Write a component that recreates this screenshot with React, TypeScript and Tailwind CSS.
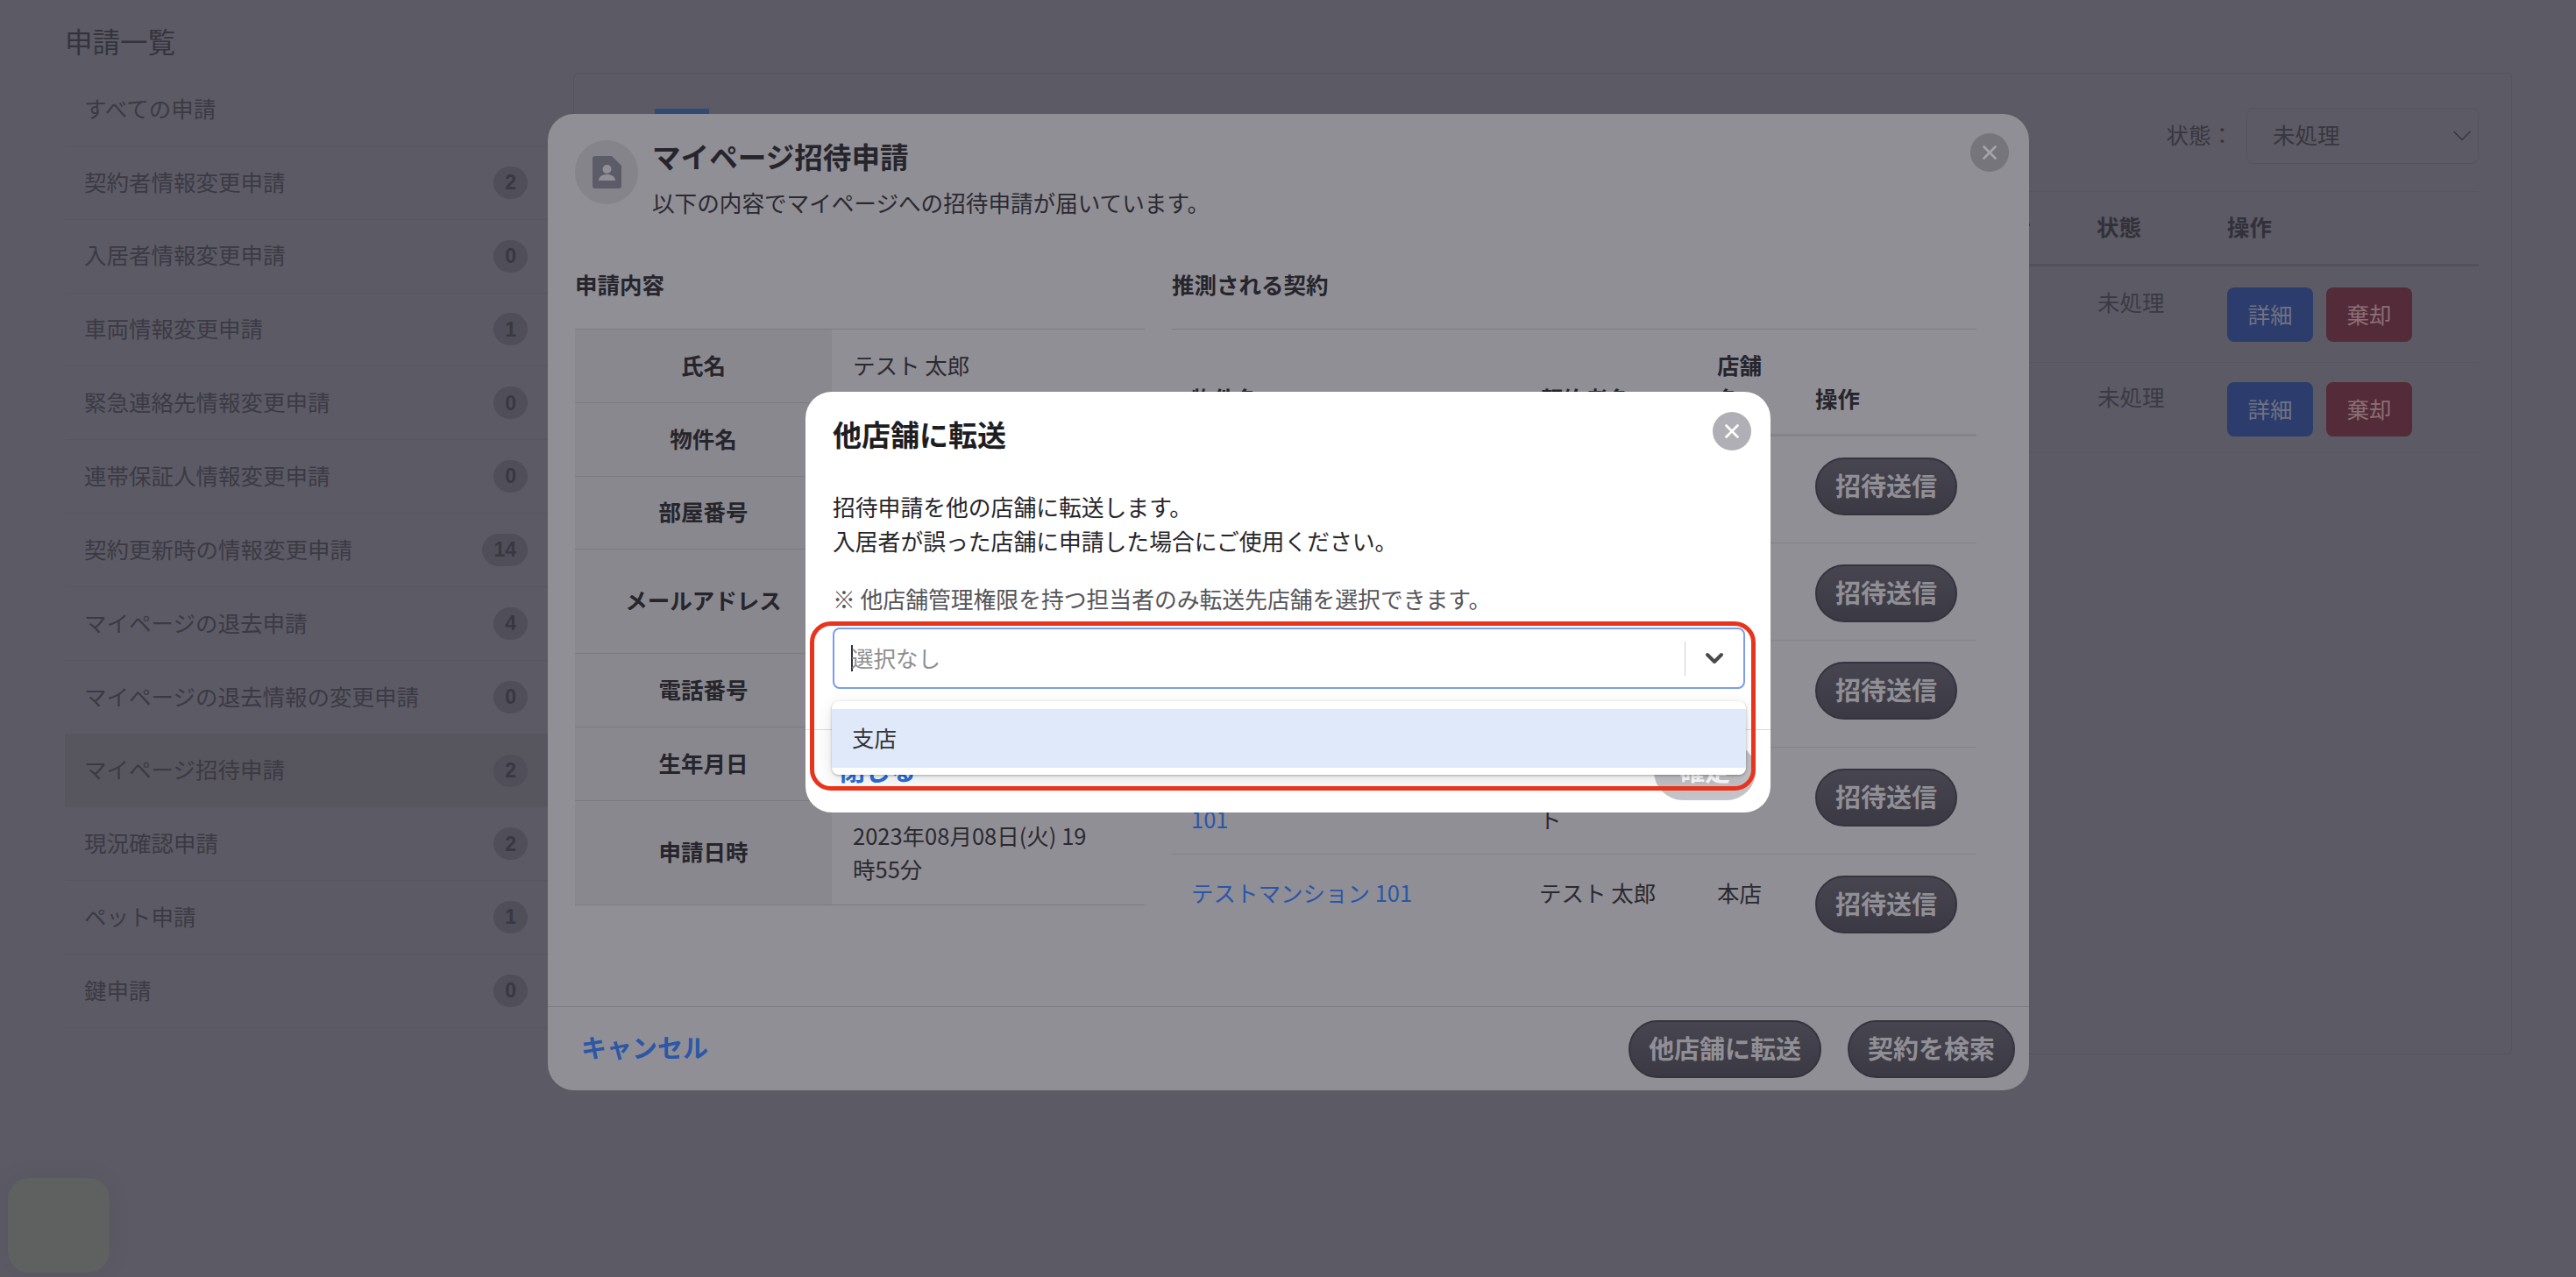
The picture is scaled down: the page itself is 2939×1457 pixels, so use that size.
import type { ReactNode } from 'react';
import { ChevronDown, X } from 'lucide-react';

const sideItems = [
	{ label: 'すべての申請' },
	{ label: '契約者情報変更申請', count: 2 },
	{ label: '入居者情報変更申請', count: 0 },
	{ label: '車両情報変更申請', count: 1 },
	{ label: '緊急連絡先情報変更申請', count: 0 },
	{ label: '連帯保証人情報変更申請', count: 0 },
	{ label: '契約更新時の情報変更申請', count: 14 },
	{ label: 'マイページの退去申請', count: 4 },
	{ label: 'マイページの退去情報の変更申請', count: 0 },
	{ label: 'マイページ招待申請', count: 2, active: true },
	{ label: '現況確認申請', count: 2 },
	{ label: 'ペット申請', count: 1 },
	{ label: '鍵申請', count: 0 },
];

const requestRows: { label: string; value: ReactNode; h: string }[] = [
	{ label: '氏名', value: 'テスト 太郎', h: 'h-[84px]' },
	{ label: '物件名', value: 'テストマンション', h: 'h-[84px]' },
	{ label: '部屋番号', value: '101', h: 'h-[83px]' },
	{ label: 'メールアドレス', value: '', h: 'h-[119px]' },
	{ label: '電話番号', value: '', h: 'h-[84px]' },
	{ label: '生年月日', value: '', h: 'h-[84px]' },
	{
		label: '申請日時',
		value: (
			<>
				2023年08月08日(火) 19
				<br />
				時55分
			</>
		),
		h: 'h-[119px]',
	},
];

const contractRows: { h: string; name: ReactNode; tenant: ReactNode; shop: string }[] = [
	{ h: 'h-[122px]', name: 'テストマンション 101', tenant: 'テスト 太郎', shop: '本店' },
	{ h: 'h-[111px]', name: 'テストマンション 101', tenant: 'テスト 太郎', shop: '本店' },
	{ h: 'h-[122px]', name: 'テストマンション 101', tenant: 'テスト 太郎', shop: '本店' },
	{
		h: 'h-[122px]',
		name: (
			<>
				テストマンション
				<br />
				101
			</>
		),
		tenant: (
			<>
				テスト テス
				<br />ト
			</>
		),
		shop: '本店',
	},
	{ h: 'h-[114px]', name: 'テストマンション 101', tenant: 'テスト 太郎', shop: '本店' },
];

function DarkButton({ children }: { children: string }) {
	return (
		<button className="h-[66px] shrink-0 rounded-full border-2 border-[#35333e] bg-gradient-to-b from-[#47454f] to-[#3b3944] px-[21px] pb-[3px] text-[29px] leading-none font-bold text-[#918f96]">
			{children}
		</button>
	);
}

function Background() {
	return (
		<div className="flex h-full pr-[73px] pl-[74px]">
			{/* sidebar */}
			<div className="w-[551px] shrink-0">
				<div className="h-[83px] pt-[22px] text-[31.5px] leading-[48px] text-[#35343d]">申請一覧</div>
				{sideItems.map((item) => (
					<div
						key={item.label}
						className={`flex h-[83.85px] items-center justify-between border-b border-[#585660] pr-[23px] pl-[22px] text-[25.5px] text-[#3b3a44] ${item.active ? 'bg-[#57555e]' : ''}`}
					>
						<span className="pb-[3px]">{item.label}</span>
						{item.count !== undefined && (
							<span className="flex h-[37px] min-w-[37px] items-center justify-center rounded-full bg-[#504e58] px-[13px] font-['Liberation_Sans',sans-serif] text-[23px] font-bold text-[#393842]">
								{item.count}
							</span>
						)}
					</div>
				))}
			</div>

			{/* main card */}
			<div className="mt-[83px] ml-[29px] flex h-[1120px] flex-1 flex-col rounded-[6px] border border-[#55535d] px-[37px]">
				<div className="flex h-[135px] shrink-0 items-start border-b border-[#585660]">
					<div className="mt-[40px] ml-[55px] h-[10px] w-[62px] bg-[#2f4a75]" />
					<div className="mt-[39px] ml-auto flex items-center gap-[15px]">
						<span className="pb-[3px] text-[25.5px] text-[#38363f]">状態：</span>
						<div className="flex h-[64px] w-[265px] items-center justify-between rounded-[8px] border border-[#54525c] pl-[29px] text-[25.5px] text-[#38363f]">
							<span className="pb-[3px]">未処理</span>
							<ChevronDown className="h-[36px] w-[36px] text-[#38363f]" strokeWidth={1} />
						</div>
					</div>
				</div>
				<div className="flex h-[85px] shrink-0 items-center border-b-[3px] border-[#53515b] pb-[3px] text-[25.5px] font-bold text-[#32313a]">
					<span className="flex-1 pr-[75px] text-right">申請者</span>
					<span className="w-[149px]">状態</span>
					<span className="w-[287px]">操作</span>
				</div>
				{[0, 1].map((i) => (
					<div
						key={i}
						className={`flex shrink-0 border-b border-[#585660] text-[25.5px] text-[#3b3a44] ${i === 0 ? 'h-[110px] pt-[24px]' : 'h-[103px] pt-[22px]'}`}
					>
						<span className="flex-1" />
						<span className="-mt-[3px] w-[149px] leading-[38px]">未処理</span>
						<div className="-ml-[1px] flex w-[287px] gap-[15px]">
							<span className="flex h-[62px] w-[98px] items-center justify-center rounded-[8px] bg-[#2c3c6c] pb-[2px] text-[#6f7383]">詳細</span>
							<span className="flex h-[62px] w-[98px] items-center justify-center rounded-[8px] bg-[#542b38] pb-[2px] text-[#8b6f76]">棄却</span>
						</div>
					</div>
				))}
			</div>

			{/* floating widget, bottom left */}
			<div className="absolute top-[1344px] left-[9px] h-[108px] w-[116px] rounded-[24px] bg-[#5f6060] shadow-[0_0_30px_rgba(0,0,0,0.06)]" />
		</div>
	);
}

function InviteModal() {
	return (
		<div className="absolute top-[130px] left-[625px] flex h-[1114px] w-[1690px] flex-col rounded-[30px] bg-[#918f96] text-[25.5px] text-[#2a2930]">
			<button className="absolute top-[22px] right-[23px] flex h-[44px] w-[44px] items-center justify-center rounded-full bg-[#76757c] text-[#a5a4aa]">
				<X className="h-[26px] w-[26px]" strokeWidth={2.5} />
			</button>

			<div className="flex h-[147px] shrink-0 gap-[16px] pt-[30px] pl-[31px]">
				<div className="flex h-[73px] w-[72px] items-center justify-center rounded-full bg-[#85848b]">
					<svg width="33" height="37" viewBox="0 0 33 37">
						<path d="M3 0h19l11 11v23a3 3 0 0 1-3 3H3a3 3 0 0 1-3-3V3a3 3 0 0 1 3-3z" fill="#5c5b68" />
						<circle cx="16.5" cy="15" r="5" fill="#918f96" />
						<path d="M7 28c0-4.500 4.500-7 9.500-7s9.500 2.500 9.500 7z" fill="#918f96" />
					</svg>
				</div>
				<div className="-mt-[3px]">
					<div className="text-[32.6px] leading-[42px] font-bold text-[#26252c]">マイページ招待申請</div>
					<div className="mt-[13px] text-[25.6px] leading-[38px]">以下の内容でマイページへの招待申請が届いています。</div>
				</div>
			</div>

			<div className="flex flex-1 gap-[31px] pl-[31px]">
				<div className="w-[650px]">
					<div className="flex h-[98px] items-center pb-[3px] font-bold text-[#26252c]">申請内容</div>
					<div className="border-t border-[#7c7b82]">
						{requestRows.map((row) => (
							<div key={row.label} className={`flex border-b border-[#7c7b82] ${row.h}`}>
								<div className="flex w-[293px] items-center justify-center bg-[#8a888f] pb-[3px] font-bold text-[#26252c]">{row.label}</div>
								<div className="flex flex-1 items-center px-[24px] pb-[3px] leading-[38px]">
									<span>{row.value}</span>
								</div>
							</div>
						))}
					</div>
				</div>

				<div className="w-[918px]">
					<div className="flex h-[98px] items-center pb-[3px] font-bold text-[#26252c]">推測される契約</div>
					<div className="grid h-[123px] grid-cols-[399px_201px_113px_205px] items-end border-t border-b-[3px] border-t-[#7c7b82] border-b-[#84858a] pb-[22px] leading-[38px] font-bold text-[#26252c]">
						<span className="pl-[22px]">物件名</span>
						<span className="pl-[22px]">契約者名</span>
						<span className="ml-[22px] w-[52px]">店舗名</span>
						<span className="pl-[21px]">操作</span>
					</div>
					{contractRows.map((row, i) => (
						<div
							key={i}
							className={`grid grid-cols-[399px_201px_113px_205px] pt-[24px] leading-[38px] ${row.h} ${i < 4 ? 'border-b border-[#84838a]' : ''}`}
						>
							<a className="pl-[22px] text-[#2a56a8]">{row.name}</a>
							<span className="pl-[20px]">{row.tenant}</span>
							<span className="pl-[22px]">{row.shop}</span>
							<div className="pl-[21px]">
								<DarkButton>招待送信</DarkButton>
							</div>
						</div>
					))}
				</div>
			</div>

			<div className="flex h-[96px] shrink-0 items-center justify-between border-t border-[#7c7b82] pr-[16px] pl-[38px]">
				<span className="pb-[3px] text-[29px] font-bold text-[#2c57a6]">キャンセル</span>
				<div className="flex gap-[30px]">
					<DarkButton>他店舗に転送</DarkButton>
					<DarkButton>契約を検索</DarkButton>
				</div>
			</div>
		</div>
	);
}

function TransferDialog() {
	return (
		<div className="absolute top-[447px] left-[919px] flex h-[480px] w-[1101px] flex-col rounded-[30px] bg-white text-[25.8px] text-[#26262a]">
			<button className="absolute top-[23px] right-[22px] flex h-[44px] w-[44px] items-center justify-center rounded-full bg-[#b0afb5] text-white">
				<X className="h-[26px] w-[26px]" strokeWidth={2.5} />
			</button>

			<div className="flex-1 pt-[25px] pr-[29px] pl-[31px]">
				<div className="text-[33px] leading-[46px] font-bold text-[#1d1d22]">他店舗に転送</div>
				<div className="mt-[40px] leading-[39px]">
					招待申請を他の店舗に転送します。
					<br />
					入居者が誤った店舗に申請した場合にご使用ください。
				</div>
				<div className="mt-[27px] leading-[39px] text-[#55555a]">※ 他店舗管理権限を持つ担当者のみ転送先店舗を選択できます。</div>
				<div className="mt-[14px] flex h-[70px] items-center rounded-[8px] border-2 border-[#7b9cf0] pl-[19px] text-[25.5px] text-[#8e8e8e]">
					<span className="-mr-[2px] h-[30px] w-[2px] bg-[#333333]" />
					<span className="flex-1 pb-[2px]">選択なし</span>
					<span className="h-[39px] w-px bg-[#d0d0d0]" />
					<span className="flex w-[66px] items-center justify-center text-[#4a4a4a]">
						<ChevronDown className="h-[32px] w-[32px]" strokeWidth={3} />
					</span>
				</div>
			</div>

			<div className="flex h-[95px] shrink-0 items-center justify-between border-t border-[#dcdcdc] pr-[17px] pl-[39px]">
				<span className="pb-[3px] text-[29px] font-bold text-[#2a6fdc]">閉じる</span>
				<span className="flex h-[66px] w-[116px] items-center justify-center rounded-full bg-[#c4c4c8] pb-[3px] text-[29px] font-bold text-white">確定</span>
			</div>

			{/* open select menu */}
			<div className="absolute top-[353px] left-[30px] h-[84px] w-[1043px] rounded-[8px] bg-white py-[9px] shadow-[0_1px_3px_rgba(0,0,0,0.3),0_6px_20px_rgba(0,0,0,0.12)]">
				<div className="flex h-[67px] items-center bg-[#dfe9fa] pb-[3px] pl-[23px] text-[25.5px] text-[#333333]">支店</div>
			</div>

			{/* annotation box */}
			<div className="absolute top-[262px] left-[5px] h-[193px] w-[1079px] rounded-[24px] border-[5px] border-[#e8341c]" />
		</div>
	);
}

export default function App() {
	return (
		<div className="relative h-[1457px] w-[2939px] overflow-hidden bg-[#5c5a64] font-['Noto_Sans_CJK_JP','Noto_Sans',sans-serif]">
			<Background />
			<InviteModal />
			<TransferDialog />
		</div>
	);
}
